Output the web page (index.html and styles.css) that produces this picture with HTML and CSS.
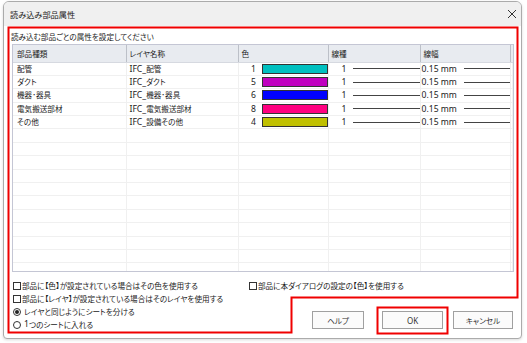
FILE: index.html
```html
<!DOCTYPE html>
<html lang="ja">
<head>
<meta charset="UTF-8">
<title>読み込み部品属性</title>
<link rel="stylesheet" href="styles.css">
</head>
<body>

<div class="window">
    <div class="titlebar">
        <span class="title">読み込み部品属性</span>
        <svg class="close" width="10" height="10" viewBox="0 0 10 10">
            <path d="M1 1 L9 9 M9 1 L1 9" stroke="#333" stroke-width="1"/>
        </svg>
    </div>

    <div class="content">
        <p class="caption">読み込む部品ごとの属性を設定してください</p>

        <div class="grid">
            <table>
                <colgroup>
                    <col style="width:113px">
                    <col style="width:112px">
                    <col style="width:90px">
                    <col style="width:92px">
                    <col style="width:90px">
                    <col>
                </colgroup>
                <thead>
                    <tr>
                        <th>部品種類</th>
                        <th>レイヤ名称</th>
                        <th>色</th>
                        <th>線種</th>
                        <th>線幅</th>
                        <th class="filler"></th>
                    </tr>
                </thead>
                <tbody>
                    <tr>
                        <td>配管</td><td><span class="lat">IFC_</span>配管</td>
                        <td><div class="color"><span class="no lat">1</span><span class="swatch" style="background:#00c0c0"></span></div></td>
                        <td><div class="ltype"><span class="lat">1</span><i></i></div></td>
                        <td><div class="lwidth"><span class="lat">0.15 mm</span><i></i></div></td>
                        <td></td>
                    </tr>
                    <tr>
                        <td>ダクト</td><td><span class="lat">IFC_</span>ダクト</td>
                        <td><div class="color"><span class="no lat">5</span><span class="swatch" style="background:#c000c0"></span></div></td>
                        <td><div class="ltype"><span class="lat">1</span><i></i></div></td>
                        <td><div class="lwidth"><span class="lat">0.15 mm</span><i></i></div></td>
                        <td></td>
                    </tr>
                    <tr>
                        <td>機器･器具</td><td><span class="lat">IFC_</span>機器･器具</td>
                        <td><div class="color"><span class="no lat">6</span><span class="swatch" style="background:#0000ff"></span></div></td>
                        <td><div class="ltype"><span class="lat">1</span><i></i></div></td>
                        <td><div class="lwidth"><span class="lat">0.15 mm</span><i></i></div></td>
                        <td></td>
                    </tr>
                    <tr>
                        <td>電気搬送部材</td><td><span class="lat">IFC_</span>電気搬送部材</td>
                        <td><div class="color"><span class="no lat">8</span><span class="swatch" style="background:#ff0080"></span></div></td>
                        <td><div class="ltype"><span class="lat">1</span><i></i></div></td>
                        <td><div class="lwidth"><span class="lat">0.15 mm</span><i></i></div></td>
                        <td></td>
                    </tr>
                    <tr>
                        <td>その他</td><td><span class="lat">IFC_</span>設備その他</td>
                        <td><div class="color"><span class="no lat">4</span><span class="swatch" style="background:#c0c000"></span></div></td>
                        <td><div class="ltype"><span class="lat">1</span><i></i></div></td>
                        <td><div class="lwidth"><span class="lat">0.15 mm</span><i></i></div></td>
                        <td></td>
                    </tr>
                    <tr><td></td><td></td><td></td><td></td><td></td><td></td></tr>
                    <tr><td></td><td></td><td></td><td></td><td></td><td></td></tr>
                    <tr><td></td><td></td><td></td><td></td><td></td><td></td></tr>
                    <tr><td></td><td></td><td></td><td></td><td></td><td></td></tr>
                    <tr><td></td><td></td><td></td><td></td><td></td><td></td></tr>
                    <tr><td></td><td></td><td></td><td></td><td></td><td></td></tr>
                    <tr><td></td><td></td><td></td><td></td><td></td><td></td></tr>
                    <tr><td></td><td></td><td></td><td></td><td></td><td></td></tr>
                    <tr><td></td><td></td><td></td><td></td><td></td><td></td></tr>
                    <tr><td></td><td></td><td></td><td></td><td></td><td></td></tr>
                    <tr><td></td><td></td><td></td><td></td><td></td><td></td></tr>
                </tbody>
            </table>
        </div>

        <div class="options">
            <label class="check"><span class="box"></span>部品に【色】が設定されている場合はその色を使用する</label>
            <label class="check"><span class="box"></span>部品に本ダイアログの設定の【色】を使用する</label>
            <label class="check wide"><span class="box"></span>部品に【レイヤ】が設定されている場合はそのレイヤを使用する</label>
        </div>

        <div class="footer">
            <div class="radios">
                <label class="radio"><span class="dot on"></span>レイヤと同じようにシートを分ける</label>
                <label class="radio"><span class="dot"></span><span class="lat">1</span>つのシートに入れる</label>
            </div>
            <div class="buttons">
                <button class="help">ヘルプ</button>
                <button class="ok"><span class="lat">OK</span></button>
                <button class="cancel">キャンセル</button>
            </div>
        </div>
    </div>
</div>

<!-- annotation marks drawn over the dialog -->
<svg class="marks" width="527" height="343" viewBox="0 0 527 343">
    <path d="M8.5 27.5 H517.5 V297.5 H291.5 V332.5 H8.5 Z" fill="none" stroke="#f00000" stroke-width="2"/>
    <rect x="377.5" y="307.5" width="70" height="26" fill="none" stroke="#f00000" stroke-width="2"/>
</svg>

</body>
</html>
```

FILE: styles.css
```css
* {
    margin: 0;
    padding: 0;
    box-sizing: border-box;
}

body {
    position: relative;
    width: 527px;
    height: 343px;
    overflow: hidden;
    background: #fff;
    font-family: "Noto Sans CJK JP", "Noto Sans", sans-serif;
    font-feature-settings: "palt";
    font-size: 7.6px;
    color: #1a1a1a;
}

.lat {
    font-family: "Noto Sans", sans-serif;
    font-size: 8.6px;
}

.window {
    margin: 1px 0 0 3px;
    width: 519px;
    height: 338px;
    border: 1px solid #ababab;
    border-radius: 6px 6px 4px 4px;
    background: #fff;
    overflow: hidden;
    box-shadow: 0 1px 3px rgba(0,0,0,0.15);
}

.titlebar {
    height: 24px;
    background: #f0f0f0;
    display: flex;
    align-items: center;
    justify-content: space-between;
    padding: 0 4px 0 6px;
}

.title {
    font-size: 8.2px;
}

.content {
    padding: 5px 8px 0 8px;
}

.caption {
    line-height: 12px;
    margin-left: -1px;
    margin-bottom: 1px;
}

/* Grid */
.grid {
    width: 502px;
    height: 228px;
    border: 1px solid #c4c6d4;
    overflow: hidden;
}

.grid table {
    width: 100%;
    border-collapse: collapse;
    table-layout: fixed;
}

.grid th {
    height: 17px;
    background: #e8ebf0;
    border-right: 1px solid #bcc0c8;
    border-bottom: 1px solid #d6d9e0;
    font-weight: normal;
    text-align: left;
    padding-left: 3px;
    white-space: nowrap;
}

.grid th:first-child {
    padding-left: 4px;
}

.grid th.filler {
    border-right: none;
}

.grid td {
    height: 13.4px;
    line-height: 12px;
    border-right: 1px solid #f0f0f0;
    border-bottom: 1px solid #f0f0f0;
    padding: 0 0 0 3px;
    white-space: nowrap;
    overflow: hidden;
}

.grid td:first-child {
    padding-left: 4px;
}

.color {
    display: flex;
    align-items: center;
    gap: 6px;
}

.color .no {
    width: 15px;
    text-align: right;
}

.swatch {
    width: 68px;
    height: 10px;
    border: 1px solid #333;
}

.ltype, .lwidth {
    display: flex;
    align-items: center;
}

.ltype span {
    margin-left: 10px;
    width: 12px;
}

.ltype i, .lwidth i {
    display: block;
    height: 1px;
    background: #444;
}

.ltype i {
    width: 67px;
}

.lwidth {
    margin-left: -2px;
}

.lwidth span {
    width: 43px;
}

.lwidth i {
    width: 46px;
}

/* Options */
.options {
    margin-top: 7px;
    padding-left: 1px;
    display: grid;
    grid-template-columns: 236px auto;
    line-height: 13px;
}

.options .wide {
    grid-column: 1 / 3;
}

.check, .radio {
    display: flex;
    align-items: center;
    white-space: nowrap;
}

.box {
    width: 8px;
    height: 8px;
    border: 1px solid #333;
    margin-right: 1px;
    background: #fff;
}

.footer {
    display: flex;
    justify-content: space-between;
    align-items: flex-start;
    padding-left: 1px;
}

.radios {
    line-height: 13px;
}

.dot {
    width: 8px;
    height: 8px;
    border: 1px solid #333;
    border-radius: 50%;
    margin-right: 3px;
    display: flex;
    align-items: center;
    justify-content: center;
}

.dot.on::after {
    content: "";
    width: 4px;
    height: 4px;
    border-radius: 50%;
    background: #222;
}

.buttons {
    display: flex;
    margin-top: 6px;
}

.buttons button {
    height: 18px;
    border: 1px solid #a0a0a0;
    background: #fbfbfb;
    font-family: "Noto Sans CJK JP", "Noto Sans", sans-serif;
    font-feature-settings: "palt";
    font-size: 7.6px;
    color: #333;
}

.buttons .lat {
    font-size: 8px;
}

.help { width: 52px; margin-right: 18px; }
.ok { width: 61px; margin-right: 10px; }
.cancel { width: 60px; }

.marks {
    position: absolute;
    top: 0;
    left: 0;
    pointer-events: none;
}
```
